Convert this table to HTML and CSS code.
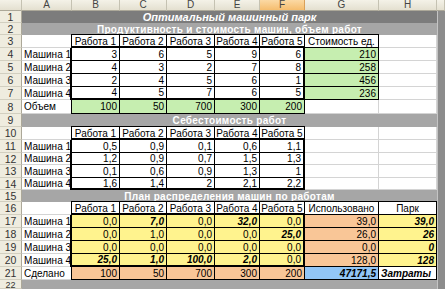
FILE: index.html
```html
<!DOCTYPE html>
<html lang="ru">
<head>
<meta charset="utf-8">
<title>Оптимальный машинный парк</title>
<link rel="stylesheet" href="styles.css">
</head>
<body>
<div class="sheet">
  <div class="corner"></div>
  <div class="ch">A</div><div class="ch">B</div><div class="ch">C</div><div class="ch">D</div><div class="ch">E</div><div class="ch sel">F</div><div class="ch">G</div><div class="ch">H</div><div class="ch"></div>

  <div class="rh">1</div><div class="band dark">Оптимальный машинный парк</div><div class="c gi"></div>
  <div class="rh">2</div><div class="band">Продуктивность и стоимость машин, объем работ</div><div class="c gi"></div>

  <div class="rh">3</div><div class="c"></div>
  <div class="c b ctr">Работа 1</div><div class="c b ctr">Работа 2</div><div class="c b ctr">Работа 3</div><div class="c b ctr">Работа 4</div><div class="c b ctr">Работа 5</div><div class="c b ctr">Стоимость ед.</div><div class="c"></div><div class="c gi"></div>

  <div class="rh">4</div><div class="c">Машина 1</div>
  <div class="c b n L T">3</div><div class="c b n T">6</div><div class="c b n T">5</div><div class="c b n T">9</div><div class="c b n T R">6</div><div class="c b n g">210</div><div class="c"></div><div class="c gi"></div>
  <div class="rh">5</div><div class="c">Машина 2</div>
  <div class="c b n L">4</div><div class="c b n">3</div><div class="c b n">2</div><div class="c b n">7</div><div class="c b n R">8</div><div class="c b n g">258</div><div class="c"></div><div class="c gi"></div>
  <div class="rh">6</div><div class="c">Машина 3</div>
  <div class="c b n L">2</div><div class="c b n">4</div><div class="c b n">5</div><div class="c b n">6</div><div class="c b n R">1</div><div class="c b n g">456</div><div class="c"></div><div class="c gi"></div>
  <div class="rh">7</div><div class="c">Машина 4</div>
  <div class="c b n L Bt">4</div><div class="c b n Bt">5</div><div class="c b n Bt">7</div><div class="c b n Bt">6</div><div class="c b n R Bt">5</div><div class="c b n g">236</div><div class="c"></div><div class="c gi"></div>

  <div class="rh">8</div><div class="c">Объем</div>
  <div class="c b n g">100</div><div class="c b n g">50</div><div class="c b n g">700</div><div class="c b n g">300</div><div class="c b n g">200</div><div class="c"></div><div class="c"></div><div class="c gi"></div>

  <div class="rh">9</div><div class="band">Себестоимость работ</div><div class="c gi"></div>

  <div class="rh">10</div><div class="c"></div>
  <div class="c b ctr">Работа 1</div><div class="c b ctr">Работа 2</div><div class="c b ctr">Работа 3</div><div class="c b ctr">Работа 4</div><div class="c b ctr">Работа 5</div><div class="c"></div><div class="c"></div><div class="c gi"></div>

  <div class="rh">11</div><div class="c">Машина 1</div>
  <div class="c b n L T">0,5</div><div class="c b n T">0,9</div><div class="c b n T">0,1</div><div class="c b n T">0,6</div><div class="c b n T R">1,1</div><div class="c"></div><div class="c"></div><div class="c gi"></div>
  <div class="rh">12</div><div class="c">Машина 2</div>
  <div class="c b n L">1,2</div><div class="c b n">0,9</div><div class="c b n">0,7</div><div class="c b n">1,5</div><div class="c b n R">1,3</div><div class="c"></div><div class="c"></div><div class="c gi"></div>
  <div class="rh">13</div><div class="c">Машина 3</div>
  <div class="c b n L">0,1</div><div class="c b n">0,6</div><div class="c b n">0,9</div><div class="c b n">1,3</div><div class="c b n R">1</div><div class="c"></div><div class="c"></div><div class="c gi"></div>
  <div class="rh">14</div><div class="c">Машина 4</div>
  <div class="c b n L Bt">1,6</div><div class="c b n Bt">1,4</div><div class="c b n Bt">2</div><div class="c b n Bt">2,1</div><div class="c b n R Bt">2,2</div><div class="c"></div><div class="c"></div><div class="c gi"></div>

  <div class="rh">15</div><div class="band">План распределения машин по работам</div><div class="c gi"></div>

  <div class="rh">16</div><div class="c"></div>
  <div class="c b ctr">Работа 1</div><div class="c b ctr">Работа 2</div><div class="c b ctr">Работа 3</div><div class="c b ctr">Работа 4</div><div class="c b ctr">Работа 5</div><div class="c b ctr">Использовано</div><div class="c b ctr">Парк</div><div class="c gi"></div>

  <div class="rh">17</div><div class="c">Машина 1</div>
  <div class="c b n y L T">0,0</div><div class="c b n y T bi">7,0</div><div class="c b n y T">0,0</div><div class="c b n y T bi">32,0</div><div class="c b n y T R">0,0</div><div class="c b n o">39,0</div><div class="c b n y bi">39,0</div><div class="c gi"></div>
  <div class="rh">18</div><div class="c">Машина 2</div>
  <div class="c b n y L">0,0</div><div class="c b n y">1,0</div><div class="c b n y">0,0</div><div class="c b n y">0,0</div><div class="c b n y R bi">25,0</div><div class="c b n o">26,0</div><div class="c b n y bi">26</div><div class="c gi"></div>
  <div class="rh">19</div><div class="c">Машина 3</div>
  <div class="c b n y L">0,0</div><div class="c b n y">0,0</div><div class="c b n y">0,0</div><div class="c b n y">0,0</div><div class="c b n y R">0,0</div><div class="c b n o">0,0</div><div class="c b n y bi">0</div><div class="c gi"></div>
  <div class="rh">20</div><div class="c">Машина 4</div>
  <div class="c b n y L Bt bi">25,0</div><div class="c b n y Bt bi">1,0</div><div class="c b n y Bt bi">100,0</div><div class="c b n y Bt bi">2,0</div><div class="c b n y R Bt">0,0</div><div class="c b n o">128,0</div><div class="c b n y bi">128</div><div class="c gi"></div>

  <div class="rh">21</div><div class="c">Сделано</div>
  <div class="c b n o">100</div><div class="c b n o">50</div><div class="c b n o">700</div><div class="c b n o">300</div><div class="c b n o">200</div><div class="c b n bl bi">47171,5</div><div class="c b bi">Затраты</div><div class="c gi"></div>

  <div class="rh last">22</div><div class="band"></div><div class="c gi"></div>
</div>
</body>
</html>
```
FILE: styles.css
```css
html, body {
  margin: 0;
  padding: 0;
  background: #ffffff;
}

.sheet {
  width: 445px;
  height: 289px;
  overflow: hidden;
  display: grid;
  grid-template-columns: 22px 50px 48px 47px 48px 45px 45px 74px 58px 1fr;
  grid-template-rows: 11px 12px 12px 13px 13px 13px 13px 13px 14px 13px 13px 13px 12px 13px 12px 12px 13px 13px 13px 13px 13px 13px 9px;
  font-family: "Liberation Sans", Arial, sans-serif;
  font-size: 10px;
  color: #000;
}

.corner,
.ch {
  box-sizing: border-box;
  background: linear-gradient(#f4f2e8, #e4e0d0);
  border-right: 1px solid #c5c2b2;
  border-bottom: 1px solid #aca899;
  color: #444;
  font-size: 10px;
  display: flex;
  align-items: center;
  justify-content: center;
  line-height: 10px;
}

.ch.sel {
  background: linear-gradient(#fbd9a4, #f5bd6e);
  border-right-color: #d9a05a;
}

.rh {
  box-sizing: border-box;
  background: #efecdf;
  border-right: 1px solid #aca899;
  border-bottom: 1px solid #d2cfc0;
  color: #333;
  font-size: 10.5px;
  display: flex;
  align-items: center;
  justify-content: center;
  line-height: 10px;
}

.rh.last {
  align-items: flex-start;
  padding-top: 1px;
  font-size: 9px;
  line-height: 8px;
}

.c {
  box-sizing: border-box;
  border-right: 1px solid #d4d4d4;
  border-bottom: 1px solid #d4d4d4;
  padding: 0 2px;
  display: flex;
  align-items: center;
  white-space: nowrap;
  line-height: 11px;
  background: #ffffff;
}

.n { justify-content: flex-end; }
.ctr { justify-content: center; padding: 0; }

.b {
  border-right: 1px solid #000;
  border-bottom: 1px solid #000;
  box-shadow: var(--sl, -1px 0 0 #000), var(--st, 0 -1px 0 #000), -1px -1px 0 #000;
}

.L { --sl: -2px 0 0 #000; }
.T { --st: 0 -2px 0 #000; }
.R { border-right-width: 2px; }
.Bt { border-bottom-width: 2px; }

.g { background: #c6eeb0; }
.y { background: #fff38e; }
.o { background: #f9c697; }
.bl { background: #92c6f6; }

.bi {
  font-weight: bold;
  font-style: italic;
}

.gi {
  background: #8c8c8c;
  border-right: none;
  border-bottom: none;
  border-left: 1px solid #c4c4c4;
}

.band {
  grid-column: 2 / 10;
  background: #a6a6a6;
  color: #ffffff;
  font-weight: bold;
  font-size: 10px;
  display: flex;
  align-items: center;
  justify-content: center;
  white-space: nowrap;
  letter-spacing: 0.3px;
}

.band.dark {
  background: #7c7c7c;
  font-style: italic;
  font-size: 11px;
  letter-spacing: 0;
}
```
